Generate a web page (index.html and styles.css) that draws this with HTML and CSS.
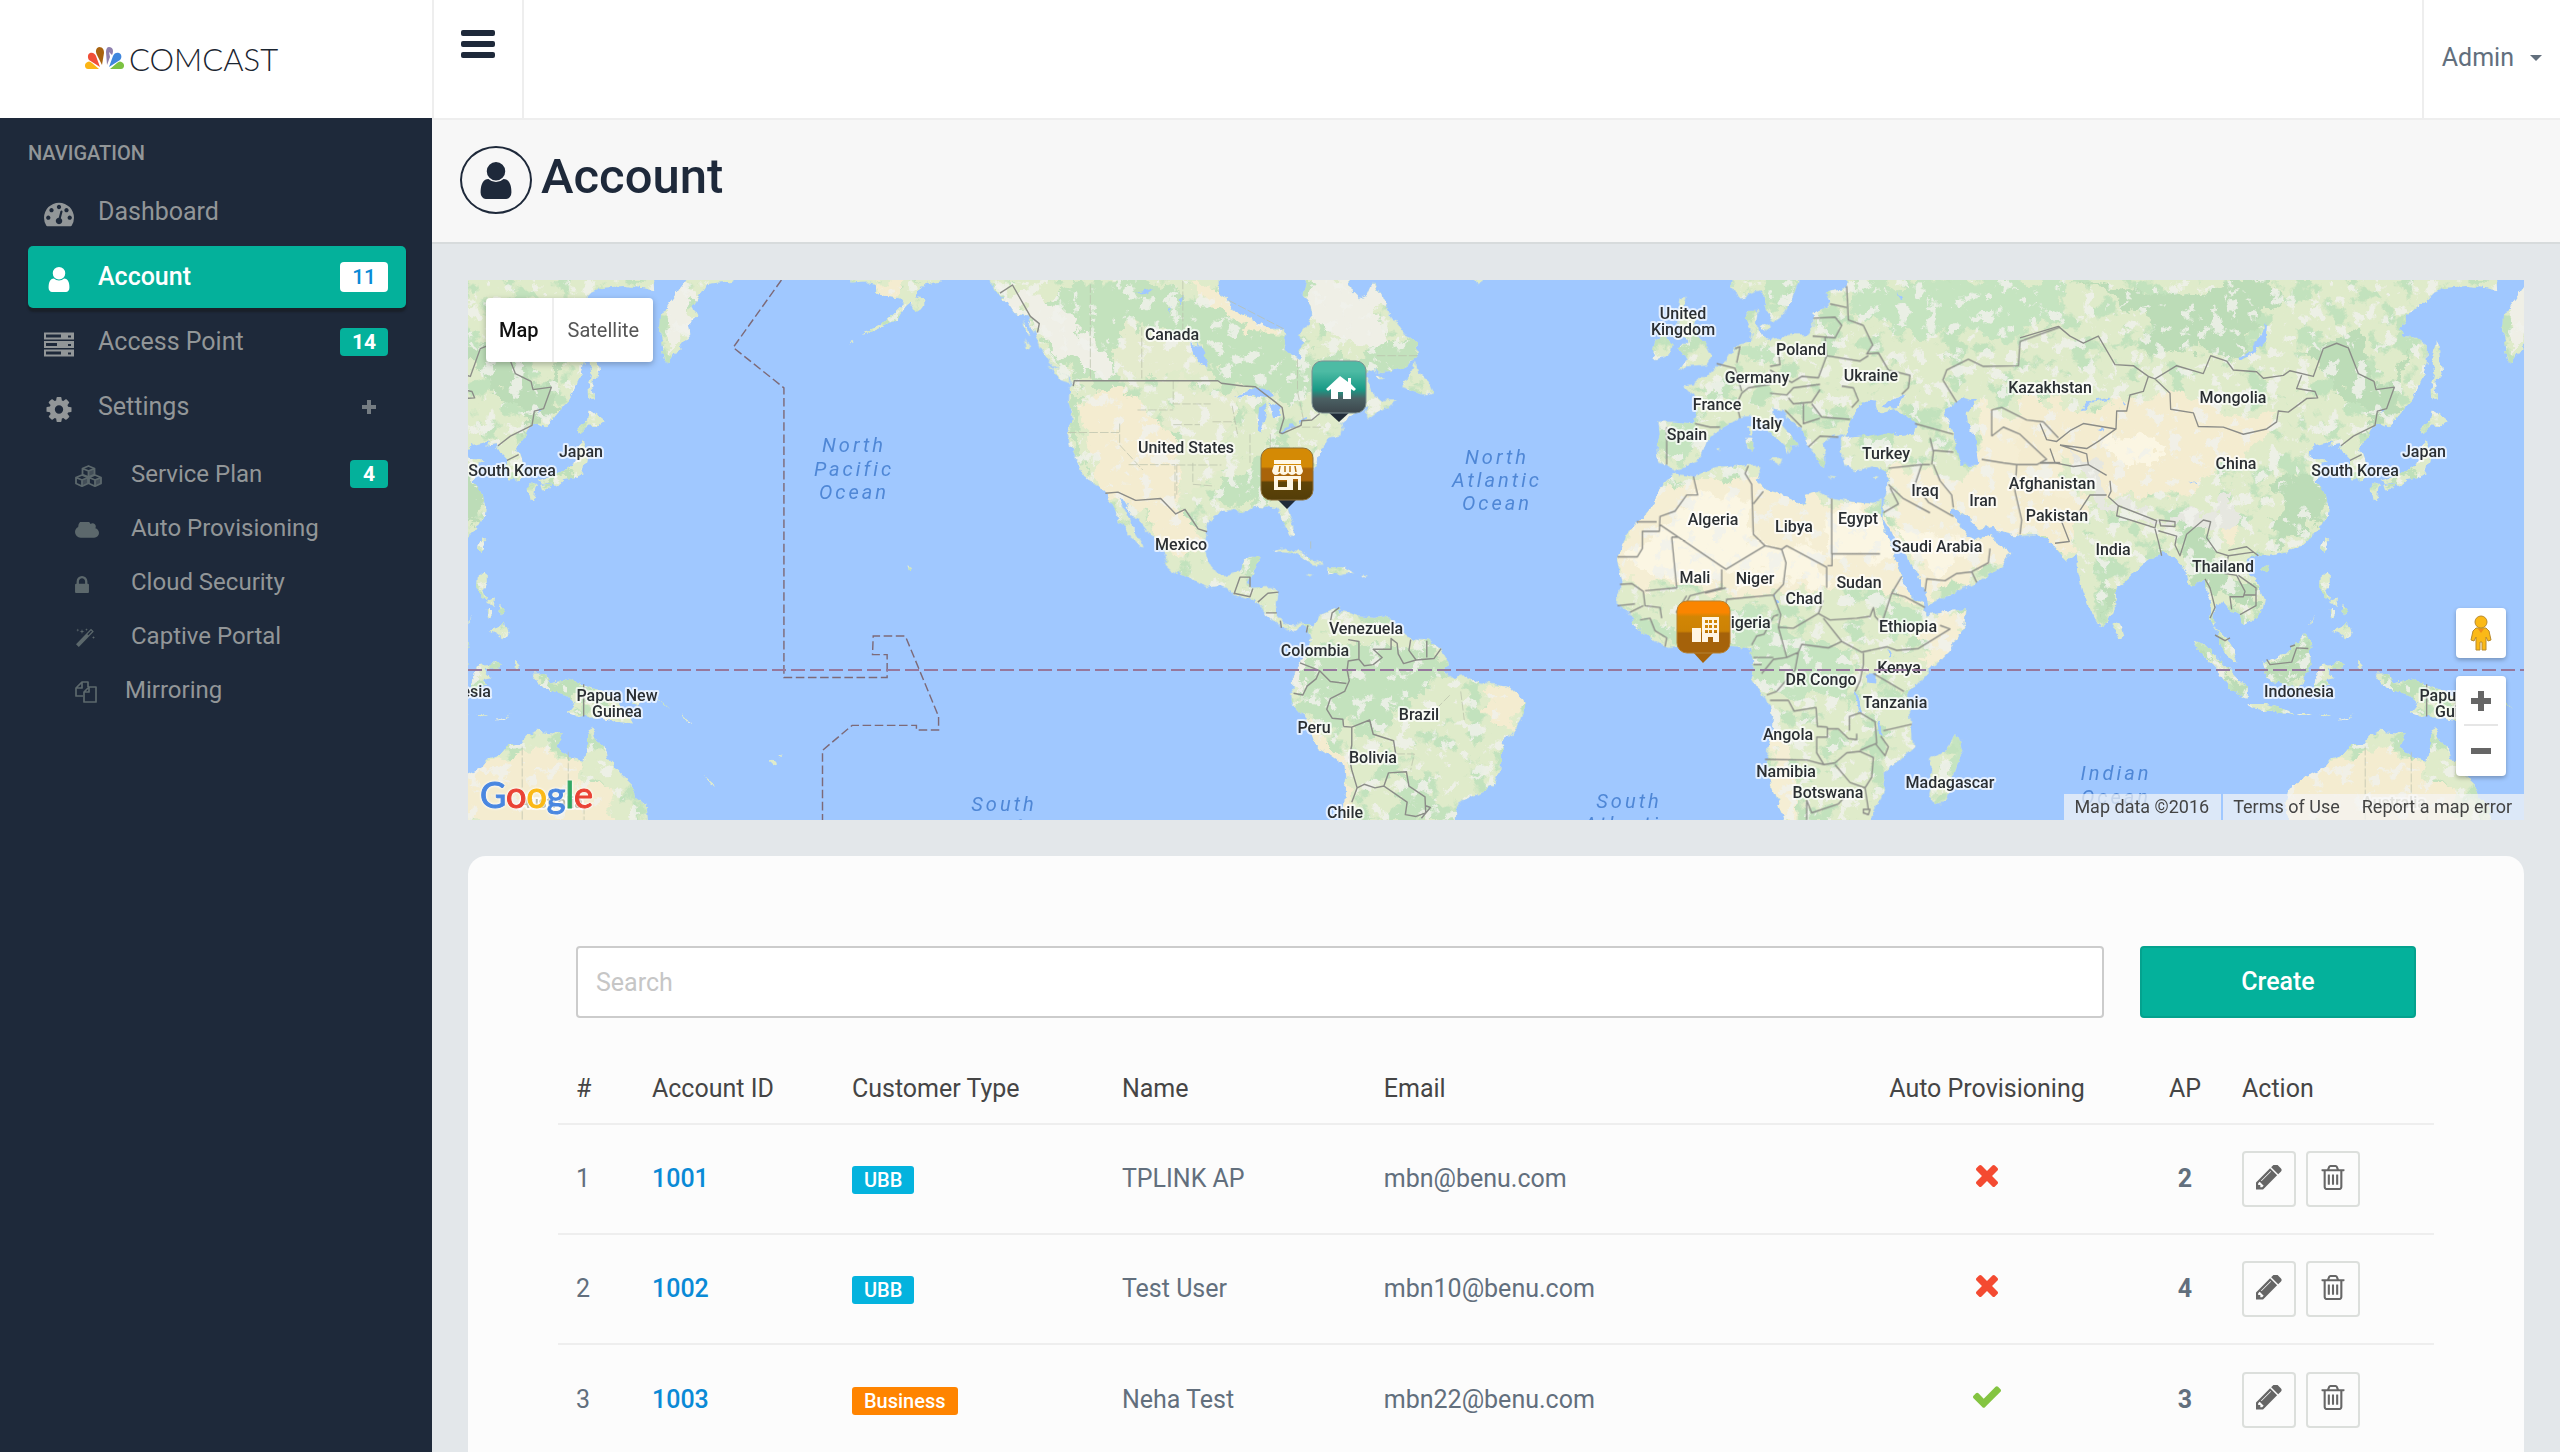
FILE: index.html
```html
<!DOCTYPE html>
<html lang="en">
<head>
<meta charset="utf-8">
<title>Account</title>
<link rel="stylesheet" href="styles.css">
</head>
<body>
<svg class="sprite" aria-hidden="true">
  <symbol id="i-user" viewBox="256 128 1280 1536"><path d="M1536 1399q0 109-62.5 187t-150.5 78h-854q-88 0-150.5-78t-62.5-187q0-85 8.5-160.5t31.5-152 58.5-131 94-89 134.5-34.5q131 128 313 128t313-128q76 0 134.5 34.5t94 89 58.5 131 31.5 152 8.5 160.5zm-256-887q0 159-112.5 271.5t-271.5 112.5-271.5-112.5-112.5-271.5 112.5-271.5 271.5-112.5 271.5 112.5 112.5 271.5z"/></symbol>
  <symbol id="i-dash" viewBox="0 256 1792 1408"><path d="M384 1152q0-53-37.5-90.5t-90.5-37.5-90.5 37.5-37.5 90.5 37.5 90.5 90.5 37.5 90.5-37.5 37.5-90.5zm192-448q0-53-37.5-90.5t-90.5-37.5-90.5 37.5-37.5 90.5 37.5 90.5 90.5 37.5 90.5-37.5 37.5-90.5zm428 481l101-382q6-26-7.5-48.5t-38.5-29.5-48 6.5-30 39.5l-101 382q-60 5-107 43.5t-63 98.5q-20 77 20 146t117 89 146-20 89-117q16-60-6-117t-72-91zm660-33q0-53-37.5-90.5t-90.5-37.5-90.5 37.5-37.5 90.5 37.5 90.5 90.5 37.5 90.5-37.5 37.5-90.5zm-640-640q0-53-37.5-90.5t-90.5-37.5-90.5 37.5-37.5 90.5 37.5 90.5 90.5 37.5 90.5-37.5 37.5-90.5zm448 192q0-53-37.5-90.5t-90.5-37.5-90.5 37.5-37.5 90.5 37.5 90.5 90.5 37.5 90.5-37.5 37.5-90.5zm320 448q0 261-141 483-19 29-54 29h-1402q-35 0-54-29-141-221-141-483 0-182 71-348t191-286 286-191 348-71 348 71 286 191 191 286 71 348z"/></symbol>
  <symbol id="i-server" viewBox="0 0 30 24"><path fill-rule="evenodd" d="M0 0h30v7H0zM2 2v3h15V2zM24 3v2h3V3zM0 8.500h30v7H0zM2 10.500v3h11v-3zM24 11.500v2h3v-2zM0 17h30v7H0zM2 19v3h15v-3zM24 20v2h3v-2z"/></symbol>
  <symbol id="i-cog" viewBox="128 128 1536 1536"><path d="M1152 896q0-106-75-181t-181-75-181 75-75 181 75 181 181 75 181-75 75-181zm512-109v222q0 12-8 23t-20 13l-185 28q-19 54-39 91 35 50 107 138 10 12 10 25t-9 23q-27 37-99 108t-94 71q-12 0-26-9l-138-108q-44 23-91 38-16 136-29 186-7 28-36 28h-222q-14 0-24.500-8.500t-11.500-21.500l-28-184q-49-16-90-37l-141 107q-10 9-25 9-14 0-25-11-126-114-165-168-7-10-7-23 0-12 8-23 15-21 51-66.500t54-70.500q-27-50-41-99l-183-27q-13-2-21-12.500t-8-23.500v-222q0-12 8-23t19-13l186-28q14-46 39-92-40-57-107-138-10-12-10-24 0-10 9-23 26-36 98.500-107.500t94.500-71.500q13 0 26 10l138 107q44-23 91-38 16-136 29-186 7-28 36-28h222q14 0 24.500 8.500t11.500 21.500l28 184q49 16 90 37l142-107q9-9 24-9 13 0 25 10 129 119 165 170 7 8 7 22 0 12-8 23-15 21-51 66.500t-54 70.500q26 50 41 98l183 28q13 2 21 12.500t8 23.500z"/></symbol>
  <symbol id="i-cubes" viewBox="0 0 27 22"><g fill="none" stroke="currentColor" stroke-width="1.800" stroke-linejoin="round"><path d="M13.500 1l6 2.500v6l-6 2.500-6-2.500v-6zM7.500 3.500l6 2.500 6-2.500M13.500 6v6M7 10l6 2.500v6L7 21.200 1 18.500v-6zM1 12.500L7 15l6-2.500M7 15v6M20 10l6 2.500v6l-6 2.700-6-2.700v-6zM14 12.500l6 2.500 6-2.500M20 15v6"/></g><path opacity=".6" d="M13.500 6l6-2.500v6l-6 2.500zM7 15l6-2.500v6l-6 2.700zM20 15l6-2.500v6l-6 2.700z"/></symbol>
  <symbol id="i-cloud" viewBox="64 384 1920 1152"><path d="M1984 1152q0 159-112.500 271.500t-271.500 112.500h-1088q-185 0-316.500-131.500t-131.500-316.500q0-132 71-241.500t187-163.500q-2-28-2-43 0-212 150-362t362-150q158 0 286.500 88t187.500 230q70-62 166-62 106 0 181 75t75 181q0 75-41 138 129 30 213 134.500t84 239.500z"/></symbol>
  <symbol id="i-lock" viewBox="320 128 1152 1408"><path d="M640 768h512v-192q0-106-75-181t-181-75-181 75-75 181v192zm832 96v576q0 40-28 68t-68 28h-960q-40 0-68-28t-28-68v-576q0-40 28-68t68-28h32v-192q0-184 132-316t316-132 316 132 132 316v192h32q40 0 68 28t28 68z"/></symbol>
  <symbol id="i-magic" viewBox="0 0 20 20"><path fill-rule="evenodd" d="M16 .8l2.800 2.800L3.800 19 1 16.200zM16 2.600l-3.600 3.700 1 1L17 3.600zM7 1l.6 1.900L9.500 3.500l-1.900.6L7 6l-.6-1.900-1.900-.6 1.900-.6zM2.800.5l.4 1.200 1.200.4-1.200.4-.4 1.200-.4-1.200L1.200 2.100l1.200-.4zM11.500.3l.4 1 1 .4-1 .4-.4 1-.4-1-1-.4 1-.4zM18.500 8l.4 1.100 1.100.4-1.100.4-.4 1.100-.4-1.100-1.100-.4 1.100-.4z"/></symbol>
  <symbol id="i-copy" viewBox="0 0 22 22"><path fill="none" stroke="currentColor" stroke-width="1.700" stroke-linejoin="round" d="M8 15H1V7l6-6h6v5M1 7h6V1M9 11l5-5h7v15H9zM9 11h5V6"/></symbol>
  <symbol id="i-pencil" viewBox="128 256 1536 1408"><path d="M491 1536l91-91-235-235-91 91v107h128v128h107zm523-928q0-22-22-22-10 0-17 7l-542 542q-7 7-7 17 0 22 22 22 10 0 17-7l542-542q7-7 7-17zm-54-192l416 416-832 832h-416v-416zm683 96q0 53-37 90l-166 166-416-416 166-165q36-38 90-38 53 0 91 38l235 234q37 39 37 91z"/></symbol>
  <symbol id="i-trash" viewBox="192 128 1408 1536"><path d="M704 736v576q0 14-9 23t-23 9h-64q-14 0-23-9t-9-23v-576q0-14 9-23t23-9h64q14 0 23 9t9 23zm256 0v576q0 14-9 23t-23 9h-64q-14 0-23-9t-9-23v-576q0-14 9-23t23-9h64q14 0 23 9t9 23zm256 0v576q0 14-9 23t-23 9h-64q-14 0-23-9t-9-23v-576q0-14 9-23t23-9h64q14 0 23 9t9 23zm128 724v-948h-896v948q0 22 7 40.500t14.500 27 10.500 8.500h832q3 0 10.500-8.500t14.500-27 7-40.500zm-672-1076h448l-48-117q-7-9-17-11h-317q-10 2-17 11zm928 32v64q0 14-9 23t-23 9h-96v948q0 83-47 143.500t-113 60.500h-832q-66 0-113-58.500t-47-141.500v-952h-96q-14 0-23-9t-9-23v-64q0-14 9-23t23-9h309l70-167q15-37 54-63t79-26h320q40 0 79 26t54 63l70 167h309q14 0 23 9t9 23z"/></symbol>
  <symbol id="i-times" viewBox="302 366 1188 1188"><path d="M1490 1322q0 40-28 68l-136 136q-28 28-68 28t-68-28l-294-294-294 294q-28 28-68 28t-68-28l-136-136q-28-28-28-68t28-68l294-294-294-294q-28-28-28-68t28-68l136-136q28-28 68-28t68 28l294 294 294-294q28-28 68-28t68 28l136 136q28 28 28 68t-28 68l-294 294 294 294q28 28 28 68z"/></symbol>
  <symbol id="i-check" viewBox="121 334 1550 1188"><path d="M1671 566q0 40-28 68l-724 724-136 136q-28 28-68 28t-68-28l-136-136-362-362q-28-28-28-68t28-68l136-136q28-28 68-28t68 28l294 295 656-657q28-28 68-28t68 28l136 136q28 28 28 68z"/></symbol>
</svg>

<div class="app">
  <header class="topbar">
    <a class="brand" href="#" aria-label="Comcast">
      <svg class="brand-mark" viewBox="0 0 39 24" aria-hidden="true">
        <path fill="#fbb516" d="M14 22H3c-3 0-4-4-2-6 2-2 4-2 6 0z"/>
        <path fill="#f04e37" d="M15 20L4 13C2 10 3 7 5 6c3-1 5 1 6 3z"/>
        <path fill="#a8630f" d="M17 18L12 8c-2-4-1-7 2-8 4 0 5 3 5 6z"/>
        <path fill="#8e7fae" d="M22 18L21 5c0-3 1-5 3-5 4 0 5 4 3 8l-3-3 1 5z"/>
        <path fill="#3f86dd" d="M24 20l4-11c1-3 4-4 6-3 3 1 3 5 1 7z"/>
        <path fill="#7cc242" d="M25 22l7-6c2-2 4-2 6 0 2 2 1 6-2 6z"/>
      </svg>
      <span class="brand-name">COMCAST</span>
    </a>
    <button class="menu-toggle" type="button" aria-label="Toggle menu"><span></span><span></span><span></span></button>
    <button class="user-menu" type="button">Admin<span class="caret"></span></button>
  </header>

  <nav class="sidebar">
    <h2 class="nav-title">NAVIGATION</h2>
    <ul class="nav-list">
      <li><a class="nav-link" href="#"><svg class="nav-icon"><use href="#i-dash"/></svg>Dashboard</a></li>
      <li><a class="nav-link nav-link--active" href="#"><svg class="nav-icon"><use href="#i-user"/></svg>Account<span class="badge badge--light">11</span></a></li>
      <li><a class="nav-link" href="#"><svg class="nav-icon"><use href="#i-server"/></svg>Access Point<span class="badge">14</span></a></li>
      <li><a class="nav-link" href="#"><svg class="nav-icon"><use href="#i-cog"/></svg>Settings<span class="nav-plus"></span></a>
        <ul class="subnav">
          <li><a class="subnav-link" href="#"><span class="subnav-icon"><svg width="27" height="22"><use href="#i-cubes"/></svg></span>Service Plan<span class="badge">4</span></a></li>
          <li><a class="subnav-link" href="#"><span class="subnav-icon"><svg width="24" height="17"><use href="#i-cloud"/></svg></span>Auto Provisioning</a></li>
          <li><a class="subnav-link" href="#"><span class="subnav-icon"><svg width="14" height="17"><use href="#i-lock"/></svg></span>Cloud Security</a></li>
          <li><a class="subnav-link" href="#"><span class="subnav-icon"><svg width="20" height="20"><use href="#i-magic"/></svg></span>Captive Portal</a></li>
          <li><a class="subnav-link" href="#"><span class="subnav-icon subnav-icon--tight"><svg width="22" height="22"><use href="#i-copy"/></svg></span>Mirroring</a></li>
        </ul>
      </li>
    </ul>
  </nav>

  <main class="main">
    <div class="page-head">
      <span class="page-icon"><svg width="34" height="37"><use href="#i-user"/></svg></span>
      <h1>Account</h1>
    </div>

    <div class="content">
      <section class="map" aria-label="Account map">
        <svg class="map-canvas" viewBox="0 0 2056 540" preserveAspectRatio="xMidYMid slice">
          <defs>
            <filter id="mottle" x="0" y="0" width="100%" height="100%" color-interpolation-filters="sRGB">
              <feTurbulence type="fractalNoise" baseFrequency=".07" numOctaves="5" seed="4"/>
              <feColorMatrix values="0 0 0 0 .94  0 0 0 0 .945  0 0 0 0 .92  14 0 0 0 -8.200"/>
            </filter>
            <filter id="mottle-green" x="0" y="0" width="100%" height="100%" color-interpolation-filters="sRGB">
              <feTurbulence type="fractalNoise" baseFrequency=".04" numOctaves="5" seed="11"/>
              <feColorMatrix values="0 0 0 0 .76  0 0 0 0 .885  0 0 0 0 .74  12 0 0 0 -6.700"/>
            </filter>
            <filter id="rough" x="-5%" y="-5%" width="110%" height="110%">
              <feTurbulence type="fractalNoise" baseFrequency=".04" numOctaves="4" seed="2"/>
              <feDisplacementMap in="SourceGraphic" scale="36" xChannelSelector="R" yChannelSelector="G"/>
            </filter>
            <filter id="coast" x="-2%" y="-2%" width="104%" height="104%">
              <feTurbulence type="fractalNoise" baseFrequency=".12" numOctaves="3" seed="5" result="n"/>
              <feDisplacementMap in="SourceGraphic" in2="n" scale="7" xChannelSelector="R" yChannelSelector="G"/>
            </filter>

            <path id="l-rim" transform="translate(1835 -10) scale(.35714)" d="M640 20L610 60 580 100 560 130 558 170 565 210 570 250 582 262 600 235 620 210 645 180 640 150 665 130 650 100 670 70 690 40 760 30 775 20ZM372 200L362 250 368 290 360 330 362 365 378 362 370 330 372 305 392 300 385 260 380 215ZM360 390L375 400 408 425 385 440 360 438 335 458 332 440 355 425ZM345 475L355 500 352 535 340 570 320 580 290 585 270 605 255 595 225 600 215 590 250 580 290 560 315 545 330 520 330 490ZM190 600L215 605 210 635 195 645 190 620ZM225 602L255 598 250 612 230 618ZM62 748L71 755 60 790 50 780ZM50 850L75 852 75 880 65 900 80 925 60 915 48 890ZM80 925L98 920 95 940 80 935ZM75 955L92 955 88 975 78 970ZM110 935L122 950 118 970 108 955ZM80 1010L100 1005 125 985 137 1015 120 1035 100 1020ZM155 1092L162 1100 170 1108 160 1122 153 1110ZM200 1130L240 1130 255 1155 290 1145 345 1160 400 1180 450 1220 485 1270 430 1265 380 1250 330 1250 300 1240 320 1215 290 1185 240 1175 215 1150ZM480 1210L520 1195 500 1215ZM545 1200L580 1225 570 1215ZM100 1262L145 1243 120 1258ZM40 1243L76 1244 60 1250ZM-50 1500L-40 1450 22 1415 60 1395 80 1370 110 1360 135 1330 165 1330 190 1300 215 1290 285 1298 270 1335 310 1365 345 1375 358 1330 360 1295 370 1278 385 1320 408 1335 415 1370 450 1410 480 1440 495 1480 520 1500 525 1560 -40 1560ZM685 1416L718 1447 700 1440ZM866 1380L880 1372 888 1382 875 1387ZM888 1362L904 1356 895 1366ZM1253 824L1266 832 1258 842ZM1086 205L1098 195 1102 203ZM1090 20L1090 38 1140 35 1165 40 1165 65 1185 72 1225 75 1240 95 1215 120 1190 145 1150 165 1125 182 1150 176 1190 158 1225 135 1250 100 1262 90 1275 115 1300 100 1300 85 1275 75 1300 40 1380 20ZM620 1240L635 1255 648 1272 630 1258Z"/>
            <path id="l-na" transform="translate(532 -10) scale(.35714)" d="M-40 15L-32 28 -12 60 20 90 40 120 75 130 100 180 115 220 140 260 165 285 190 298 208 315 195 330 193 370 200 410 190 455 195 490 215 530 225 560 245 585 270 600 295 625 310 650 325 680 330 705 350 720 370 755 390 775 402 780 400 770 380 735 365 700 345 660 330 640 345 640 360 665 375 690 400 715 420 740 440 760 460 790 468 805 462 825 480 840 510 855 545 870 585 888 610 885 635 890 655 910 690 922 715 925 735 945 745 965 770 985 790 1000 820 1012 830 1000 850 992 862 1010 872 1040 850 1090 830 1105 820 1140 822 1175 812 1190 818 1215 845 1245 870 1290 885 1330 930 1360 965 1385 968 1430 965 1480 960 1560 1275 1560 1278 1500 1300 1485 1330 1470 1380 1445 1400 1405 1405 1350 1415 1310 1440 1290 1460 1260 1472 1225 1465 1200 1430 1170 1385 1160 1340 1158 1300 1135 1270 1140 1245 1125 1255 1105 1235 1060 1200 1035 1150 1032 1110 1000 1090 970 1050 975 1000 970 975 958 945 955 950 942 930 955 895 965 885 990 875 1000 862 988 840 985 815 995 790 985 775 965 772 930 778 900 765 888 740 888 705 890 690 875 700 855 715 835 727 805 700 803 685 812 675 840 655 850 630 855 605 848 590 830 575 800 570 770 575 740 580 710 600 690 625 675 650 670 680 680 700 668 720 660 750 662 775 668 788 685 795 715 812 742 822 738 820 710 808 680 805 660 830 620 855 590 875 565 885 545 890 525 900 510 905 490 920 470 955 462 960 445 955 430 985 405 1010 395 1040 375 1025 395 1025 420 1060 395 1100 375 1112 365 1090 365 1075 368 1060 355 1050 355 1040 330 1030 305 1005 300 1040 280 1070 285 1100 280 1130 270 1155 255 1170 240 1165 205 1140 185 1120 160 1095 130 1085 100 1060 60 1045 35 1030 70 1005 80 985 60 975 15 860 15 850 70 870 100 875 130 855 160 838 180 845 210 838 250 820 240 800 225 795 190 795 165 760 165 720 150 690 130 650 110 630 75 615 65 615 15ZM1125 330L1150 290 1165 258 1170 285 1200 310 1215 345 1195 350 1170 345 1140 335ZM1050 290L1080 302 1060 303ZM135 268L180 292 205 318 170 308ZM65 140L80 165 80 185 68 160ZM70 190L85 220 75 225ZM765 790L800 778 840 790 870 805 905 825 880 825 850 808 820 790 790 788ZM920 830L960 830 990 848 950 855 920 850ZM855 850L878 853 870 858ZM1010 850L1028 853 1015 858ZM1320 15L1335 40 1352 30 1350 15Z"/>
            <path id="l-west" transform="translate(1072 -10) scale(.33333 .35714)" d="M355 425L400 425 460 430 475 395 460 350 425 325 460 320 470 300 500 300 530 270 560 250 585 220 600 205 630 200 635 175 618 135 630 115 655 115 650 150 660 180 690 195 760 180 800 180 820 160 818 120 850 110 870 90 855 60 920 50 920 15 1600 15 1600 790 1560 770 1520 740 1440 745 1370 730 1355 715 1320 725 1280 690 1240 665 1225 680 1240 690 1280 745 1310 755 1355 740 1360 760 1410 790 1385 830 1330 865 1250 900 1165 935 1155 900 1130 845 1095 800 1060 740 1028 695 1030 660 1040 620 1045 565 1000 550 950 560 915 550 900 500 900 470 925 455 870 470 845 480 855 520 855 550 830 535 800 480 790 450 750 420 730 390 700 385 700 410 740 450 775 490 755 490 745 520 735 490 690 455 650 410 600 415 570 430 540 445 500 480 480 530 430 550 400 560 380 545 355 540 350 500 360 460ZM690 530L730 528 722 548ZM620 470L640 470 638 508 622 505ZM628 440L638 440 636 462 628 458ZM580 15L575 50 605 80 640 65 665 60 680 110 700 145 730 125 755 80 775 28 775 15ZM662 160L690 152 680 172ZM415 80L440 75 430 110 465 130 470 180 500 210 515 240 500 265 440 270 412 283 440 255 430 235 415 220 440 200 425 170 410 130ZM345 200L375 185 398 210 390 240 345 250 340 225ZM862 575L895 579 880 583ZM993 582L1016 574 1005 587ZM528 498L542 495 538 502ZM400 570L460 578 530 555 600 548 655 545 660 565 650 590 680 620 740 635 795 660 800 630 840 620 875 640 940 650 1000 655 1025 645 1020 680 1030 720 1060 790 1075 840 1100 900 1150 935 1160 965 1220 955 1280 950 1270 1000 1230 1060 1180 1110 1130 1160 1100 1190 1110 1240 1115 1290 1120 1335 1080 1370 1030 1410 1035 1450 1020 1480 1000 1510 990 1560 740 1560 720 1500 695 1440 680 1370 695 1290 700 1250 680 1200 635 1150 640 1100 630 1060 600 1055 560 1050 500 1070 440 1055 380 1058 340 1035 290 1000 265 960 235 940 232 910 245 880 232 810 260 740 300 700 345 655 350 620ZM1250 1297L1268 1340 1245 1400 1215 1490 1185 1495 1165 1470 1175 1430 1170 1370 1215 1345 1235 1320Z"/>
            <path id="l-east" transform="translate(1572 -10) scale(.33333 .35714)" d="M-60 15L1370 15 1375 60 1330 50 1280 45 1220 50 1180 60 1150 90 1110 120 1080 165 1090 185 1130 190 1160 210 1160 260 1140 320 1110 370 1070 415 1045 440 1020 430 1000 440 985 470 960 500 972 530 980 560 965 585 935 590 930 560 930 530 915 515 900 490 865 495 870 480 830 490 805 515 830 530 860 530 835 560 830 590 855 620 865 660 860 690 835 730 790 770 745 790 690 800 650 795 620 810 620 840 650 875 672 920 665 955 625 990 605 990 600 965 570 950 545 925 530 940 520 970 525 1000 560 1030 580 1060 595 1100 565 1085 540 1050 535 1015 510 985 515 930 500 900 490 870 450 885 440 850 410 810 370 790 330 810 290 840 260 870 230 890 225 940 200 990 180 1000 150 950 130 900 115 850 110 795 80 815 55 790 40 770 0 740 -60 740ZM225 985L240 990 250 1020 235 1032 222 1015ZM665 840L690 825 682 850ZM460 1040L500 1055 540 1090 590 1140 620 1165 620 1200 580 1180 540 1130 500 1090ZM618 1215L680 1215 750 1235 758 1245 690 1235 640 1228ZM670 1100L690 1095 740 1070 795 1020 820 1045 805 1060 815 1105 790 1150 770 1170 720 1155 690 1150 675 1120ZM835 1120L850 1105 915 1100 905 1112 860 1118 885 1140 860 1145 870 1165 845 1165 830 1185 825 1165ZM770 1243L820 1243 790 1250ZM800 995L832 965 815 985Z"/>
            <clipPath id="land"><use href="#l-rim"/><use href="#l-na"/><use href="#l-west"/><use href="#l-east"/></clipPath>

            <g id="world">
              <g filter="url(#coast)">
              <g fill="#dfebca"><use href="#l-rim"/><use href="#l-na"/><use href="#l-west"/><use href="#l-east"/></g>
              <g clip-path="url(#land)">
                <rect x="0" width="2500" height="540" filter="url(#mottle-green)"/>
                <g filter="url(#rough)">
                  <g transform="translate(532 -10) scale(.35714)">
                    <path fill="#c3e2bd" d="M100 100L220 40 400 20 560 100 700 150 790 200 840 250 1000 230 1170 200 1160 270 960 300 820 380 700 330 600 310 560 180 400 160 330 200 340 420 280 400 260 310 210 310 120 200ZM190 320L230 330 220 480 260 590 200 480ZM620 600L780 480 860 520 780 660 640 660ZM840 1080L1000 1030 1200 1040 1250 1130 1130 1200 1060 1330 980 1270 900 1290 830 1190ZM1100 1380L1180 1440 1260 1540 1150 1540ZM680 800L730 800 700 880Z"/>
                    <path fill="#e4ebcd" d="M340 170L540 190 600 300 340 300 300 220ZM480 320L640 330 640 560 490 640 480 400Z"/>
                    <path fill="#f4ecd0" d="M230 350L330 330 440 400 500 520 480 620 560 720 540 790 470 780 410 700 300 620 260 520ZM530 40L610 60 700 130 790 170 700 180 600 120ZM1370 1160L1470 1210 1440 1290 1380 1260ZM820 1200L960 1370 1000 1560 950 1540 880 1340ZM-400 30L-250 30 -300 100Z"/>
                    <path fill="#efefe6" d="M620 20L860 20 880 140 960 190 1060 230 1080 120 1030 20 560 20ZM820 1090L860 1090 850 1180 820 1180ZM0 60L110 60 280 220 320 290 230 280 120 180Z"/>
                  </g>
                  <g transform="translate(1072 -10) scale(.33333 .35714)">
                    <path fill="#c5e4c0" d="M680 20L780 20 720 140 670 90ZM600 220L710 200 700 250 610 260ZM930 40L1400 20 1560 30 1560 110 1380 220 1300 160 1080 180 930 120ZM240 970L420 1000 640 940 780 1040 960 1050 940 1210 760 1200 650 1160 630 1060 380 1060ZM360 440L480 440 420 540 370 530ZM1050 920L1130 960 1090 1060 1040 1010ZM1240 1300L1270 1300 1250 1400 1210 1400Z"/>
                    <path fill="#f5eed4" d="M400 600L660 580 800 640 1040 660 1090 830 1160 950 1060 900 840 890 700 900 420 880 240 880 220 760 340 660ZM1040 560L1180 560 1250 600 1320 500 1340 380 1560 440 1600 760 1360 740 1420 800 1160 940ZM690 1290L760 1400 800 1560 740 1560 680 1430ZM1170 960L1290 950 1190 1120 1140 1060Z"/>
                    <path fill="#fbf6e3" d="M420 640L620 640 660 760 860 790 860 880 560 860 300 860 260 800 360 700ZM880 670L1020 670 1060 800 880 800ZM1060 720L1250 750 1330 800 1180 860Z"/>
                  </g>
                  <g transform="translate(1572 -10) scale(.33333 .35714)">
                    <path fill="#bcdcb7" d="M130 30L360 80 700 20 720 80 640 160 640 240 440 230 320 220 340 140ZM760 220L960 180 1000 300 1080 380 1040 430 920 360 820 250ZM920 460L1000 430 1060 300 1120 220 1040 440ZM720 580L850 560 860 700 720 800 700 700ZM420 720L500 700 540 860 640 880 660 960 520 900 440 860ZM670 1090L820 1040 800 1160 680 1150ZM470 1040L620 1180 600 1200ZM200 880L230 900 190 990Z"/>
                    <path fill="#f4ecd0" d="M-60 360L120 400 260 360 400 330 620 440 740 400 620 520 400 640 240 640 60 520 -60 560ZM-60 600L140 620 100 800 -60 740ZM540 700L590 700 590 770 550 760Z"/>
                    <path fill="#fbf6e3" d="M190 500L290 460 370 500 240 560Z"/>
                    <path fill="#e6e7e0" d="M80 480L180 560 220 640 350 690 500 670 600 620 560 720 360 710 200 660 130 560Z"/>
                  </g>
                  <g transform="translate(1835 -10) scale(.35714)">
                    <path fill="#f4ecd0" d="M-60 1440L180 1340 260 1340 330 1400 420 1470 460 1560 -60 1560ZM1160 20L1250 20 1240 90 1170 60Z"/>
                    <path fill="#bfe0ba" d="M200 1130L340 1150 460 1240 300 1200ZM230 590L350 560 250 620Z"/>
                    <path fill="#efefe6" d="M580 80L660 40 640 190 580 230Z"/>
                  </g>
                </g>
                <rect x="0" width="2500" height="540" filter="url(#mottle)" opacity=".85"/>
              </g>
              <g fill="#a0c8ff">
                <path transform="translate(532 -10) scale(.35714)" d="M655 355L700 335 735 328 768 352 745 358 700 352ZM725 388L742 375 745 400 732 455 720 450ZM755 372L790 380 785 410 765 415ZM780 455L815 432 828 436 795 458ZM830 420L862 412 862 420 835 428ZM530 208L560 215 585 270 570 268 540 235ZM555 200L575 240 582 275 565 240ZM385 65L430 50 410 65ZM500 80L515 70 505 100ZM470 110L480 95 475 120Z"/>
                <path transform="translate(1072 -10) scale(.33333 .35714)" d="M920 455L935 410 970 365 1005 368 1010 385 1030 400 1060 392 1100 410 1130 435 1125 458 1080 462 1030 455 980 465 925 470ZM1028 382L1050 362 1094 350 1075 378 1062 392ZM1225 385L1270 355 1310 365 1280 400 1285 440 1305 460 1318 545 1265 545 1250 500 1240 460 1225 420 1215 395ZM980 1130L1012 1130 1008 1155 982 1153ZM944 1180L952 1182 966 1240 958 1238ZM1015 1260L1024 1262 1028 1305 1020 1300ZM1070 65L1090 75 1080 90ZM700 910L722 930 708 938ZM1045 1060L1055 1080 1048 1082Z"/>
                <path transform="translate(1572 -10) scale(.33333 .35714)" d="M682 150L676 195 640 232 600 256 590 248 630 230 655 190ZM125 392L140 368 210 358 208 364 150 372 135 390ZM170 445L195 440 190 452ZM245 365L258 378 250 382ZM1022 390L1032 395 1024 404ZM448 588L475 604 460 600Z"/>
              </g>
              </g>

              <g class="admin-lines">
                <path transform="translate(532 -10) scale(.35714)" d="M253 40V310M397 160V308M512 30V190M485 310V375H590M385 392H485M190 455H335M335 430V490L400 560M485 433H560M495 546H620M540 540V600L600 605M595 425H660M650 380L665 460M700 460V540M757 460V540M815 440H900M833 250V340L850 420M360 545H490V640M1055 240H1170M495 545V635M870 760V780M640 85L795 165M1110 1355H1160L1150 1400M1200 1250L1260 1190M1290 1180L1300 1260"/>
                <path transform="translate(1835 -10) scale(.35714)" d="M174 1335V1560M303 1350V1480M347 1500V1560"/>
              </g>
              <g class="borders">
                <path transform="translate(532 -10) scale(.35714)" d="M0 65L35 42 85 130 110 150 105 175M205 325L208 310H610L620 317 680 325 715 327 765 365 790 385 795 415 783 455 790 458 843 435 845 422 873 420 895 402M295 625L330 622 380 645 450 640 492 683 518 670 555 725 580 733M655 908L665 880 672 860H700V888M655 905L700 915 708 892M722 930L750 905 780 902M745 960H775M785 982L788 1002M862 995L858 1015M950 945L930 960 925 985M975 1035L1005 1040 1005 1090 975 1095 972 1120 978 1150 965 1180 925 1200 915 1230 930 1255 960 1258 962 1278M840 1100L895 1122 885 1145 860 1165 848 1190 822 1185M895 1122L925 1152 970 1158M1005 1090L1020 1108 1045 1105 1070 1085 1045 1062 1095 1062 1095 1032 1112 1045 1115 1075 1130 1102 1165 1092 1215 1088 1235 1060M1150 1035L1145 1065 1165 1092M1195 1038V1085M962 1278L985 1280 1035 1260 1045 1300 1102 1318 1108 1355M985 1280L985 1330 978 1365 985 1400 1000 1450 985 1490M1000 1450L1020 1440 1050 1450 1075 1445 1088 1408 1138 1405 1145 1445 1190 1475 1192 1520 1165 1530 1135 1525 1140 1490 1075 1445M1192 1500L1205 1505 1180 1535"/>
                <path transform="translate(1072 -10) scale(.33333 .35714)" d="M460 578L473 630 440 630 405 675 360 690 358 732H307V780L292 803H232M358 712L545 830 558 838 675 772 640 740 635 600 615 570 625 548M290 705H350M395 748L410 890 315 898M395 748H415M545 838V890L450 912 440 930M558 890L495 905M640 655L670 620M675 772L725 782 740 772 860 832V890M875 640V795H1020M862 828H876V795M725 782L738 820 730 880 700 910 560 922 555 945M700 910L722 965 715 1000 760 1003 835 962 850 925M835 962L870 980 950 975 990 970 1000 945 1005 970 1025 990 1055 905 1095 915 1155 945M1055 905L1085 858M850 975L905 1040 965 1070 1040 1055 1070 1065 1135 1060 1230 1005 1200 995M715 1000L740 1085 700 1090 665 1130M740 1085L775 1070 765 1120 710 1180M775 1070L785 1048 865 1058 905 1040M640 1085H700M640 1105H665M680 1190L710 1180M690 1205H745L762 1235 828 1225 832 1278 862 1280M970 1070V1105L960 1150 945 1180M1000 1130L1092 1180M1030 1290L1115 1272M862 1280V1308H830V1352L852 1385 885 1380 920 1352 960 1348M675 1370L800 1372 852 1385M862 1285L895 1285 925 1312 950 1315 950 1298M928 1290V1250L960 1240 1005 1265 1010 1325 960 1345M1005 1325L1035 1360 1045 1335 1022 1305M960 1348L1000 1365 995 1420 975 1450 930 1435 885 1385M800 1540V1485L815 1520 895 1495 925 1465M975 1450L985 1510M970 1510H990L985 1525 970 1520ZM635 1050L650 1025 672 1020 700 970 715 965M240 880L275 878 310 900 315 940 360 945 365 975M232 940L285 935M310 940L270 958M375 1055L380 1030 345 1010 330 975 300 980M440 912L408 960M380 440V545M465 430L510 440 540 440M600 415L590 375 605 345 625 330 690 320M585 220L600 215 590 260M530 262L585 275 605 340M690 270L720 265 712 205M690 280L755 315 785 298 835 302 860 240 855 190M860 240L960 255 985 240M970 155L998 210 980 235 1015 232 1045 280 1110 295 1105 330 1085 348M920 45L925 140 970 155M820 135L885 132 905 155 885 190 818 185M870 95L920 105M690 345L740 350 760 330 840 320M745 358L760 375 815 370 840 335M905 325L940 330 955 365 935 385M815 375L845 412 930 418M735 392L785 440M790 375V430L840 415M805 495L840 465 895 468M1045 555L1145 545 1170 545M1125 430L1240 460M1180 545L1200 590 1235 630 1240 665M1145 545L1125 600 1165 650 1240 690M1045 600L1090 640 1170 680M1030 680L1075 655 1050 610M1180 505L1240 510M1155 900L1160 865 1215 870 1250 850 1295 845 1310 875M1295 845L1345 820 1350 780M1170 470L1180 510 1175 545M1208 310L1220 280 1285 250 1330 270 1435 268 1440 200 1560 160M1210 310L1250 370M1355 465L1355 392 1385 385 1460 420 1510 425 1555 470M1355 465L1390 440 1440 460 1520 530 1490 545 1430 545 1425 620 1445 700 1440 740M1325 530L1390 540 1430 545M1500 540H1560"/>
                <path transform="translate(1572 -10) scale(.33333 .35714)" d="M-60 190L55 158 90 185 130 205 175 185 225 265 280 268 325 298 345 305 410 268 490 290 512 240 560 255 580 280 650 285 670 303 730 295 750 282 820 298 850 220 890 205 925 218 955 290 1002 312 1008 335 1063 328 1040 388 1012 395 1005 435 940 465 903 492M325 298L310 340 270 350 260 395 230 395 228 445 130 430 90 450 50 480 20 475 0 430M228 445L175 480 140 500 60 490M345 305L390 345 392 390 460 400 475 438 550 440 610 460 680 445 710 425 715 395 745 398 800 360 833 358 825 340 770 332 785 295M30 500L45 540 100 550 145 545 140 515 60 490M0 540L60 540M145 545L200 575M210 590L213 620 205 635 235 660 350 702 345 722 230 688 235 660M358 700L405 705 405 718 362 716ZM200 630L150 630 115 680 65 705 88 760 45 765M345 725L355 760 365 800M355 730L410 745 405 770 420 800 440 740 490 700 512 705 500 750 530 790 565 800 640 790M565 800L555 850 590 855 615 900 610 915 570 915 575 950M565 785L620 775 655 800M595 855L648 890 648 940 600 965M610 910H648M495 865L510 890 525 945 510 975M525 1022L555 1038 570 1030M680 1090L690 1105 755 1098 770 1058 805 1060M750 1055L765 1050M930 533L965 517M1160 1160V1250"/>
              </g>
              <g class="labels">
                <text x="1956" y="177">Japan</text><text x="1887" y="196">South Korea</text>
                <text x="1992" y="421">Papua New</text><text x="1992" y="437">Guinea</text>
                <text x="1831" y="417">Indonesia</text><text class="faint" x="1926" y="528">Australia</text>
                <text x="704" y="60">Canada</text><text x="718" y="173">United States</text><text x="713" y="270">Mexico</text>
                <text x="898" y="354">Venezuela</text><text x="847" y="376">Colombia</text><text x="951" y="440">Brazil</text>
                <text x="846" y="453">Peru</text><text x="905" y="483">Bolivia</text><text x="877" y="538">Chile</text>
                <text x="1215" y="39">United</text><text x="1215" y="55">Kingdom</text><text x="1333" y="75">Poland</text>
                <text x="1289" y="103">Germany</text><text x="1403" y="101">Ukraine</text><text x="1249" y="130">France</text>
                <text x="1299" y="149">Italy</text><text x="1219" y="160">Spain</text><text x="1418" y="179">Turkey</text>
                <text x="1457" y="216">Iraq</text><text x="1515" y="226">Iran</text><text x="1390" y="244">Egypt</text>
                <text x="1245" y="245">Algeria</text><text x="1326" y="252">Libya</text><text x="1469" y="272">Saudi Arabia</text>
                <text x="1227" y="303">Mali</text><text x="1287" y="304">Niger</text><text x="1391" y="308">Sudan</text>
                <text x="1336" y="324">Chad</text><text x="1277" y="348">Nigeria</text><text x="1440" y="352">Ethiopia</text>
                <text x="1431" y="393">Kenya</text><text x="1353" y="405">DR Congo</text><text x="1427" y="428">Tanzania</text>
                <text x="1320" y="460">Angola</text><text x="1318" y="497">Namibia</text><text x="1360" y="518">Botswana</text>
                <text x="1482" y="508">Madagascar</text><text x="1582" y="113">Kazakhstan</text><text x="1765" y="123">Mongolia</text>
                <text x="1768" y="189">China</text><text x="1584" y="209">Afghanistan</text><text x="1589" y="241">Pakistan</text>
                <text x="1645" y="275">India</text><text x="1755" y="292">Thailand</text>
              </g>
            </g>
          </defs>

          <use href="#world"/>
          <use href="#world" x="-1843"/>
          <path class="date-line" transform="translate(-8 -10) scale(.35714)" d="M900 28L765 217 907 330V1141H1196V1077H1155L1157 1025H1247L1340 1250V1288H1278V1275H1098L1015 1345V1560"/>
          <path class="equator" d="M0 390H2056"/>
          <g class="oceans">
            <text x="386" y="172">North</text><text x="386" y="196">Pacific</text><text x="386" y="219">Ocean</text>
            <text x="536" y="531">South</text><text x="536" y="555">Pacific</text>
            <text x="1029" y="184">North</text><text x="1029" y="207">Atlantic</text><text x="1029" y="230">Ocean</text>
            <text x="1161" y="528">South</text><text x="1161" y="551">Atlantic</text>
            <text x="1648" y="500">Indian</text><text x="1648" y="524">Ocean</text>
          </g>
          <linearGradient id="g-home" x2="0" y2="1"><stop offset=".2" stop-color="#4dbba4"/><stop offset=".55" stop-color="#199a86"/><stop offset=".72" stop-color="#4b6164"/><stop offset="1" stop-color="#3c464c"/></linearGradient>
          <linearGradient id="g-shop" x2="0" y2="1"><stop offset=".36" stop-color="#d48a05"/><stop offset=".4" stop-color="#a9640a"/><stop offset=".62" stop-color="#a9640a"/><stop offset=".66" stop-color="#5f4408"/><stop offset="1" stop-color="#533d08"/></linearGradient>
          <linearGradient id="g-office" x2="0" y2="1"><stop offset=".22" stop-color="#fa8500"/><stop offset=".3" stop-color="#d28605"/><stop offset=".58" stop-color="#cc8205"/><stop offset=".62" stop-color="#a5620a"/></linearGradient>
          <g transform="translate(844 81)">
            <path fill="#202b38" d="M15 50h24L27 61z"/>
            <rect width="54" height="52" rx="10" fill="url(#g-home)" stroke="#7d8f92"/>
            <path fill="#fff" d="M28 15L14 28l2 2 3-2v10h7v-7h5v7h8V28l3 2 2-2-5-5v-6h-3v4z"/>
          </g>
          <g transform="translate(793 168)">
            <path fill="#202b38" d="M15 50h22L26 61z"/>
            <rect width="52" height="52" rx="10" fill="url(#g-shop)" stroke="#8b6f3c"/>
            <path fill="#fff7e6" fill-rule="evenodd" d="M13 12h27v4H13zM13 17h27l2 6q-1 4-4 4-2 0-3-2-2 2-4 2-2 0-4-2-2 2-4 2-3 0-4-2-2 2-4 2-3 0-4-4zM13 28h27v14h-3V31h-5v11H13zM17 32v7h9v-7z"/>
            <path stroke="#b4700a" stroke-width="1.500" d="M19 18l-1 6M24 18v6M29 18v6M34 18l1 6"/>
          </g>
          <g transform="translate(1209 321)">
            <path fill="#a5620a" d="M15 50h23L26 62z"/>
            <rect width="53" height="52" rx="10" fill="url(#g-office)" stroke="#b58133"/>
            <path fill="#fff5e3" fill-rule="evenodd" d="M25 16h17v25h-6v-5h-5v5h-6zM15 27h9v14h-9zM28 19v3h3v-3zM32 19v3h3v-3zM37 19v3h3v-3zM28 24v3h3v-3zM32 24v3h3v-3zM37 24v3h3v-3zM28 29v3h3v-3zM32 29v3h3v-3zM37 29v3h3v-3z"/>
          </g>
        </svg>
        <div class="map-type"><button class="is-on" type="button">Map</button><button type="button">Satellite</button></div>
        <div class="map-logo" aria-label="Google"><span class="g-blue">G</span><span class="g-red">o</span><span class="g-yellow">o</span><span class="g-blue">g</span><span class="g-green">l</span><span class="g-red">e</span></div>
        <div class="map-tools">
          <button class="pegman" type="button" aria-label="Street View">
            <svg width="22" height="36" viewBox="0 0 22 36"><g fill="#fbb917" stroke="#b98a2c"><path d="M6 13h10l3 3 2 9-3 1-2-4v13h-4v-8h-2v8H6V22l-2 4-3-1 2-9z"/><circle cx="11" cy="7" r="6"/></g><path fill="#f08c1a" d="M8 14h6l-3 4z"/></svg>
          </button>
          <div class="zoom"><button class="zoom-in" type="button" aria-label="Zoom in"></button><button class="zoom-out" type="button" aria-label="Zoom out"></button></div>
        </div>
        <div class="map-legal"><span>Map data ©2016</span><span class="map-links"><a href="#">Terms of Use</a><a href="#">Report a map error</a></span></div>
      </section>

      <section class="card">
        <form class="toolbar">
          <input class="search" type="search" placeholder="Search" aria-label="Search">
          <button class="create" type="button">Create</button>
        </form>
        <table class="accounts">
          <colgroup><col class="c-num"><col class="c-id"><col class="c-type"><col class="c-name"><col class="c-mail"><col class="c-auto"><col class="c-ap"><col class="c-act"></colgroup>
          <thead><tr><th>#</th><th>Account ID</th><th>Customer Type</th><th>Name</th><th>Email</th><th class="mid">Auto Provisioning</th><th class="mid">AP</th><th>Action</th></tr></thead>
          <tbody>
            <tr><td>1</td><td><a href="#">1001</a></td><td><span class="tag">UBB</span></td><td>TPLINK AP</td><td>mbn@benu.com</td>
              <td class="mid"><svg class="no" width="22" height="22" role="img" aria-label="No"><use href="#i-times"/></svg></td><td class="mid count">2</td>
              <td><div class="actions"><button type="button" aria-label="Edit"><svg width="26" height="25"><use href="#i-pencil"/></svg></button><button type="button" aria-label="Delete"><svg width="24" height="25"><use href="#i-trash"/></svg></button></div></td></tr>
            <tr><td>2</td><td><a href="#">1002</a></td><td><span class="tag">UBB</span></td><td>Test User</td><td>mbn10@benu.com</td>
              <td class="mid"><svg class="no" width="22" height="22" role="img" aria-label="No"><use href="#i-times"/></svg></td><td class="mid count">4</td>
              <td><div class="actions"><button type="button" aria-label="Edit"><svg width="26" height="25"><use href="#i-pencil"/></svg></button><button type="button" aria-label="Delete"><svg width="24" height="25"><use href="#i-trash"/></svg></button></div></td></tr>
            <tr><td>3</td><td><a href="#">1003</a></td><td><span class="tag tag--business">Business</span></td><td>Neha Test</td><td>mbn22@benu.com</td>
              <td class="mid"><svg class="yes" width="28" height="22" role="img" aria-label="Yes"><use href="#i-check"/></svg></td><td class="mid count">3</td>
              <td><div class="actions"><button type="button" aria-label="Edit"><svg width="26" height="25"><use href="#i-pencil"/></svg></button><button type="button" aria-label="Delete"><svg width="24" height="25"><use href="#i-trash"/></svg></button></div></td></tr>
          </tbody>
        </table>
      </section>
    </div>
  </main>
</div>
</body>
</html>
```
FILE: styles.css
```css
* { box-sizing: border-box; }
body { margin: 0; font: 25px/36px Roboto, sans-serif; color: #626f7d; }
button, input { font: inherit; color: inherit; margin: 0; padding: 0; border: 0; background: none; }
a { color: inherit; text-decoration: none; }
ul { list-style: none; margin: 0; padding: 0; }
svg { display: block; fill: currentColor; }
.sprite { position: absolute; width: 0; height: 0; }

.app {
  display: grid;
  grid-template: 118px minmax(0, 1fr) / 432px minmax(0, 1fr);
  height: 100vh;
  overflow: hidden;
}

/* Top bar */
.topbar { grid-column: 1 / -1; display: flex; background: #fff; }
.brand { width: 432px; padding-left: 85px; display: flex; align-items: center; gap: 5px; color: #1b2530; }
.brand-mark { width: 39px; height: 24px; }
.brand-name { font: 300 31px/36px Lato, sans-serif; }
.menu-toggle {
  width: 92px; padding: 30px 27px 0; border: solid #eee; border-width: 0 2px;
  display: flex; flex-direction: column; gap: 5px;
}
.menu-toggle span { width: 34px; height: 6px; border-radius: 2px; background: #1e293a; }
.user-menu { margin-left: auto; padding: 0 18px 2px; border-left: 2px solid #eee; display: flex; align-items: center; gap: 16px; }
.caret { border: solid transparent; border-width: 6px 6px 0; border-top-color: #626f7d; }

/* Sidebar */
.sidebar { background: #1e293a; color: #929698; padding: 17px 26px 0 28px; }
.nav-title { margin: 0 0 10px; font-size: 20px; line-height: 36px; font-weight: 500; }
.nav-list { display: flex; flex-direction: column; gap: 3px; }
.nav-link { height: 62px; padding: 0 18px; display: flex; align-items: center; border-radius: 5px; }
.nav-link--active { background: #04b19b; color: #fff; font-weight: 500; box-shadow: 0 4px 2px #1a2029; }
.nav-icon { width: 30px; height: 25px; margin: 4px 24px 0 -2px; }
.badge {
  margin-left: auto; min-width: 38px; padding: 0 12px; border-radius: 4px;
  background: #04b19b; color: #fff; font-size: 21px; line-height: 28px; font-weight: 700; text-align: center;
}
.badge--light { background: #fff; color: #0a8ad6; font-weight: 500; line-height: 30px; }
.nav-plus {
  width: 14px; height: 14px; margin: 0 12px 0 auto;
  background: linear-gradient(#757c82, #757c82) center / 14px 4px no-repeat, linear-gradient(#757c82, #757c82) center / 4px 14px no-repeat;
}
.subnav { padding-top: 9px; }
.subnav-link { height: 54px; padding: 0 18px 0 47px; display: flex; align-items: center; font-size: 24px; }
.subnav-icon { width: 56px; padding-top: 4px; color: #5c686c; }
.subnav-icon--tight { width: 50px; }

/* Page heading */
.main { background: #e3e7ea; overflow-y: auto; scrollbar-width: none; }
.page-head {
  height: 126px; padding: 0 28px 2px; display: flex; align-items: center; gap: 9px;
  background: #f7f7f7; border-top: 2px solid #eee; border-bottom: 2px solid #d7dbdc; color: #1e293a;
}
.page-icon { width: 72px; height: 68px; border: 2px solid; border-radius: 50%; display: flex; align-items: center; justify-content: center; }
h1 { margin: 0 0 6px; font-size: 49px; line-height: 60px; font-weight: 500; }
.content { padding: 36px; display: flex; flex-direction: column; gap: 36px; }

/* Map */
.map { position: relative; height: 540px; background: #a0c8ff; overflow: hidden; color: #333; }
.map-canvas { width: 100%; height: 100%; }
.labels text { font-size: 16px; font-weight: 500; text-anchor: middle; fill: #2b2f33; stroke: #ffffffb3; stroke-width: 4px; stroke-linejoin: round; paint-order: stroke; }
.labels .faint { fill: #b9b9a8; }
.oceans text { font-size: 20px; font-style: italic; letter-spacing: 3px; text-anchor: middle; fill: #4f87d6; }
.borders { fill: none; stroke: #8b8c88; stroke-width: 4px; stroke-linejoin: round; }
.admin-lines { fill: none; stroke: #b9bfab; stroke-width: 2px; stroke-dasharray: 24 6; }
.date-line { fill: none; stroke: #7d6a78; stroke-width: 4px; stroke-dasharray: 24 10; }
.equator { fill: none; stroke: #97789c; stroke-width: 2px; stroke-dasharray: 14 5; }
.map-type { position: absolute; top: 18px; left: 18px; display: flex; height: 64px; background: #fff; border-radius: 4px; box-shadow: 0 2px 6px #0004; font-size: 20px; color: #565656; }
.map-type button { padding: 0 14px; }
.map-type .is-on { color: #111; font-weight: 500; padding: 0 13px; border-right: 2px solid #eee; }
.map-logo { position: absolute; left: 12px; bottom: 4px; font: 36px/44px Lato, sans-serif; -webkit-text-stroke: 1px; text-shadow: 0 0 3px #fff, 0 0 3px #fff, 0 0 3px #fff; }
.g-blue { color: #4a87e0; }
.g-red { color: #ea4335; }
.g-yellow { color: #fbb917; }
.g-green { color: #34a866; }
.map-tools { position: absolute; right: 18px; bottom: 44px; display: flex; flex-direction: column; gap: 18px; }
.pegman, .zoom { width: 50px; background: #fff; border-radius: 4px; box-shadow: 0 2px 4px #0004; }
.pegman { height: 50px; display: flex; align-items: center; justify-content: center; }
.zoom { display: flex; flex-direction: column; }
.zoom button { height: 50px; background: linear-gradient(#666, #666) center / 20px 6px no-repeat; }
.zoom .zoom-in { background: linear-gradient(#666, #666) center / 20px 6px no-repeat, linear-gradient(#666, #666) center / 6px 20px no-repeat, linear-gradient(#e6e6e6, #e6e6e6) bottom / 34px 2px no-repeat; }
.map-legal { position: absolute; right: 0; bottom: 0; display: flex; gap: 2px; font-size: 18px; line-height: 26px; color: #444; }
.map-legal > span { padding: 0 12px 0 10px; background: #f5f5f5b3; }
.map-links { display: flex; gap: 22px; }

/* Accounts card */
.card { padding: 90px; border-radius: 18px; background: #fcfcfc; }
.toolbar { display: flex; gap: 36px; padding: 0 18px; }
.search { flex: 1; height: 72px; padding: 0 18px; border: 2px solid #ccc; border-radius: 4px; background: #fff; }
.search::placeholder { color: #c6c6c6; opacity: 1; }
.create { width: 276px; border: 2px solid #04a28e; border-radius: 4px; background: #04b19b; color: #fff; font-weight: 500; }
.accounts { width: 100%; margin-top: 36px; table-layout: fixed; border-collapse: collapse; text-align: left; }
.accounts th { height: 70px; padding: 0 18px; font-weight: 400; color: #454545; }
.accounts td { height: 110px; padding: 0 18px; border-top: 2px solid #eee; }
.accounts .mid { text-align: center; padding: 0; }
.accounts .mid svg { margin: -6px auto 0; }
.accounts a { color: #0a8ad6; font-weight: 500; }
.count { font-weight: 700; }
.c-num { width: 4.05%; }
.c-id { width: 10.66%; }
.c-type { width: 14.39%; }
.c-name { width: 13.96%; }
.c-mail { width: 24.64%; }
.c-auto { width: 16.95%; }
.c-ap { width: 4.16%; }
.c-act { width: 11.19%; }
.no { color: #f44a31; }
.yes { color: #84c441; }
.tag { display: inline-block; padding: 0 12px; border-radius: 3px; background: #04b3de; color: #fff; font-size: 20px; line-height: 28px; font-weight: 500; vertical-align: middle; }
.tag--business { background: #ff8400; }
.actions { display: flex; gap: 10px; color: #666; }
.actions button { width: 54px; height: 56px; padding-bottom: 4px; border: 2px solid #dcdfdc; border-radius: 4px; display: flex; align-items: center; justify-content: center; }
```
